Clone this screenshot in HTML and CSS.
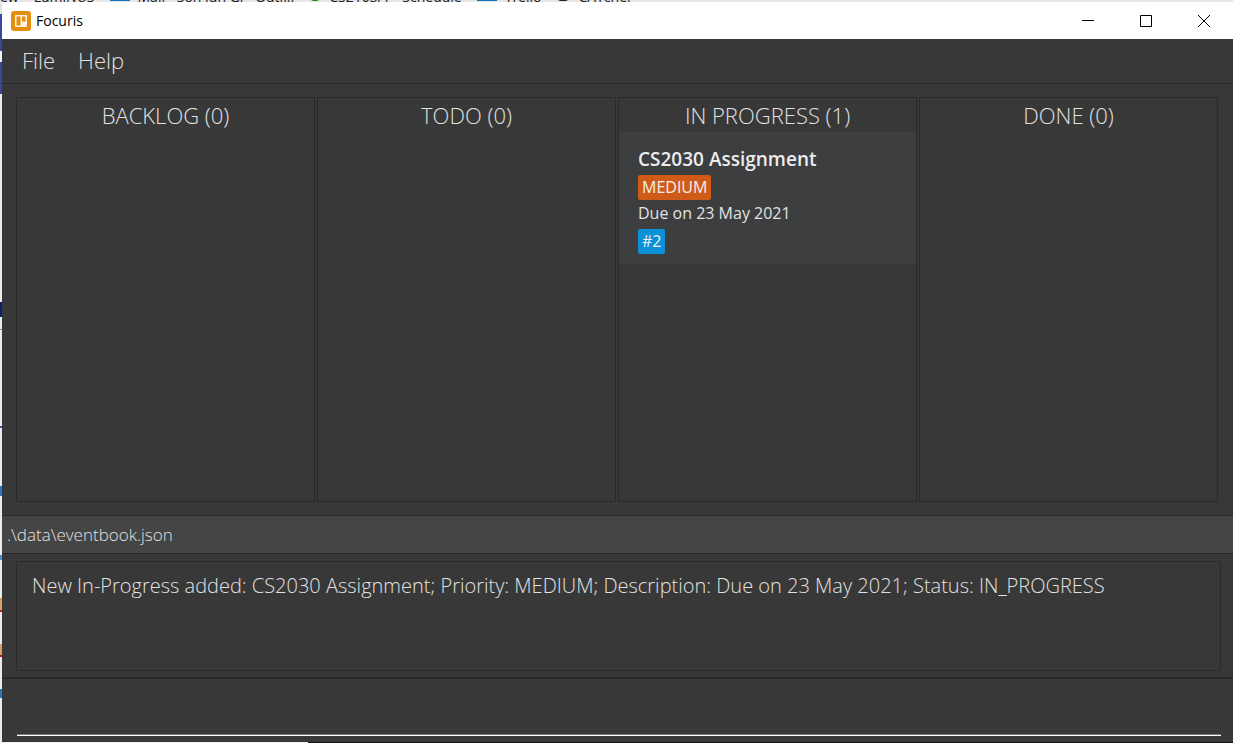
FILE: index.html
```
<!DOCTYPE html>
<html lang="en">
<head>
<meta charset="utf-8">
<title>Focuris</title>
<link rel="stylesheet" href="styles.css">
</head>
<body>
<div class="desktop">
  <div class="bookmarks" aria-hidden="true">
    <span>ew</span><span>LumiNUS</span><span class="bookmark"><i class="dot cloud"></i>Mail - Son Jun Gi - Outl...</span><span class="bookmark"><i class="dot green"></i>CS2103/T - Schedule</span><span class="bookmark"><i class="dot blue"></i>Trello</span><span class="bookmark"><i class="dot dark"></i>CATcher</span>
  </div>
  <div class="edge"></div>
  <main class="window">
    <header class="titlebar">
      <svg class="logo" viewBox="0 0 20 20" aria-hidden="true">
        <rect width="20" height="20" rx="3" fill="#e48f0f"/>
        <rect x="4" y="4" width="12" height="12" rx="1" fill="#fff3e0"/>
        <rect x="5.5" y="5.5" width="4" height="9" fill="#e48f0f"/>
        <rect x="11" y="5.5" width="3.5" height="5" fill="#e48f0f"/>
      </svg>
      <h1 class="title">Focuris</h1>
      <div class="controls">
        <button class="control" aria-label="Minimize"><svg viewBox="0 0 12 12"><path d="M0 5.5H12"/></svg></button>
        <button class="control" aria-label="Maximize"><svg viewBox="0 0 12 12"><path d="M.5 .5H11.5V11.5H.5Z"/></svg></button>
        <button class="control" aria-label="Close"><svg viewBox="0 0 12 12"><path d="M0 0L12 12M12 0L0 12"/></svg></button>
      </div>
    </header>
    <nav class="menubar">
      <button class="menu">File</button>
      <button class="menu">Help</button>
    </nav>
    <section class="board">
      <section class="column"><h2 class="heading">BACKLOG (0)</h2></section>
      <section class="column"><h2 class="heading">TODO (0)</h2></section>
      <section class="column">
        <h2 class="heading">IN PROGRESS (1)</h2>
        <article class="card">
          <h3 class="card-title">CS2030 Assignment</h3>
          <span class="tag priority">MEDIUM</span>
          <p class="description">Due on 23 May 2021</p>
          <span class="tag number">#2</span>
        </article>
      </section>
      <section class="column"><h2 class="heading">DONE (0)</h2></section>
    </section>
    <div class="path">.\data\eventbook.json</div>
    <section class="result">
      <output class="message">New In-Progress added: CS2030 Assignment; Priority: MEDIUM; Description: Due on 23 May 2021; Status: IN_PROGRESS</output>
    </section>
    <form class="command">
      <input class="command-input" type="text" aria-label="Command">
    </form>
  </main>
  <div class="taskline"></div>
</div>
</body>
</html>
```
FILE: styles.css
```
* { box-sizing: border-box; }
body { margin: 0; font-family: "Open Sans", "Noto Sans", sans-serif; }
h1, h2, h3, p { margin: 0; }
button { border: 0; padding: 0; background: none; font: inherit; color: inherit; }

.desktop {
  display: grid;
  grid-template: 2px 1fr 1px / 2px 1fr;
  height: 100vh;
}
.bookmarks {
  grid-column: 1 / -1;
  display: flex;
  align-items: flex-end;
  gap: 15px;
  overflow: hidden;
  background: #e6e6e6;
  font-size: 14px;
  line-height: 11px;
  color: #222;
  white-space: pre;
}
.bookmark { display: flex; gap: 8px; }
.dot { width: 20px; height: 10px; }
.cloud { background: #1272c4; }
.green { background: #168a16; width: 12px; border-radius: 6px; }
.blue { background: #0a72b8; }
.dark { background: #1b2630; width: 14px; border-radius: 7px; }

.edge {
  background: linear-gradient(#e4e4e4 12px, #3c449c 12px 49px, #e8f4fb 49px 60px, #3c449c 60px 92px,
    #ececec 92px 300px, #0c2466 300px 315px, #ececec 315px 327px, #888 327px 328px, #ececec 328px 424px,
    #4a4a9c 424px 426px, #ececec 426px 484px, #2a78c0 484px 494px, #ececec 494px 553px,
    #4a90d0 553px 558px, #ececec 558px 596px, #d9a066 596px 608px, #c01818 608px 610px,
    #ececec 610px 642px, #d9a066 642px 653px, #c01818 653px 655px, #ececec 655px 687px,
    #2a78c0 687px 696px, #ececec 696px);
}
.window {
  display: flex;
  flex-direction: column;
  min-width: 0;
  min-height: 0;
  background: #383838;
  color: #e2e2e2;
}
.titlebar {
  display: flex;
  align-items: center;
  height: 37px;
  padding-left: 9px;
  background: #fff;
  color: #000;
}
.logo { width: 20px; height: 20px; }
.title { margin-left: 5px; font-size: 14px; font-weight: 400; }
.controls { display: flex; margin-left: auto; }
.control { display: grid; place-items: center; width: 58px; height: 36px; }
.control svg { width: 12px; height: 12px; fill: none; stroke: #000; }

.menubar {
  display: flex;
  gap: 23px;
  height: 45px;
  padding: 0 20px 2px;
  border-bottom: 1px solid #282828;
  font-size: 22px;
  font-weight: 300;
}
.board {
  display: grid;
  grid-template-columns: repeat(4, 1fr);
  gap: 2px;
  flex: 1;
  min-height: 0;
  padding: 13px 15px 13px 14px;
}
.column { min-width: 0; border: 1px solid #2a2a2a; }
.heading {
  height: 34px;
  line-height: 34px;
  font-size: 22px;
  font-weight: 300;
  text-align: center;
}
.card {
  display: flex;
  flex-direction: column;
  align-items: flex-start;
  padding: 14px 19px 10px;
  background: #3c3e3f;
}
.card-title { font-size: 19px; font-weight: 600; line-height: 26px; color: #ececec; }
.tag {
  margin-top: 3px;
  padding: 0 4px;
  border-radius: 2px;
  font-size: 16px;
  line-height: 25px;
  color: #f0f0f0;
}
.priority { background: #d05a17; }
.number { background: #0a90d6; }
.description { font-size: 16px; line-height: 26px; }

.path {
  height: 39px;
  padding-left: 5px;
  border: solid #282828;
  border-width: 1px 0;
  background: #454545;
  font-size: 17px;
  font-weight: 300;
  line-height: 37px;
}
.result {
  padding: 7px 12px 6px 14px;
  border-bottom: 2px solid #292929;
}
.message {
  display: block;
  height: 110px;
  padding: 8px 15px;
  border: 1px solid #2a2a2a;
  font-size: 20px;
  font-weight: 300;
  line-height: 31px;
}
.command { height: 63px; padding: 0 12px 6px 15px; }
.command-input {
  display: block;
  width: 100%;
  height: 57px;
  padding: 0;
  border: 0;
  border-bottom: 1px solid #fff;
  box-shadow: inset 0 -1px #777;
  outline: 0;
  background: transparent;
  color: #fff;
  font: 300 20px "Open Sans", sans-serif;
}
.taskline {
  grid-column: 1 / -1;
  background: linear-gradient(90deg, #eee 308px, #111 308px);
}
```
